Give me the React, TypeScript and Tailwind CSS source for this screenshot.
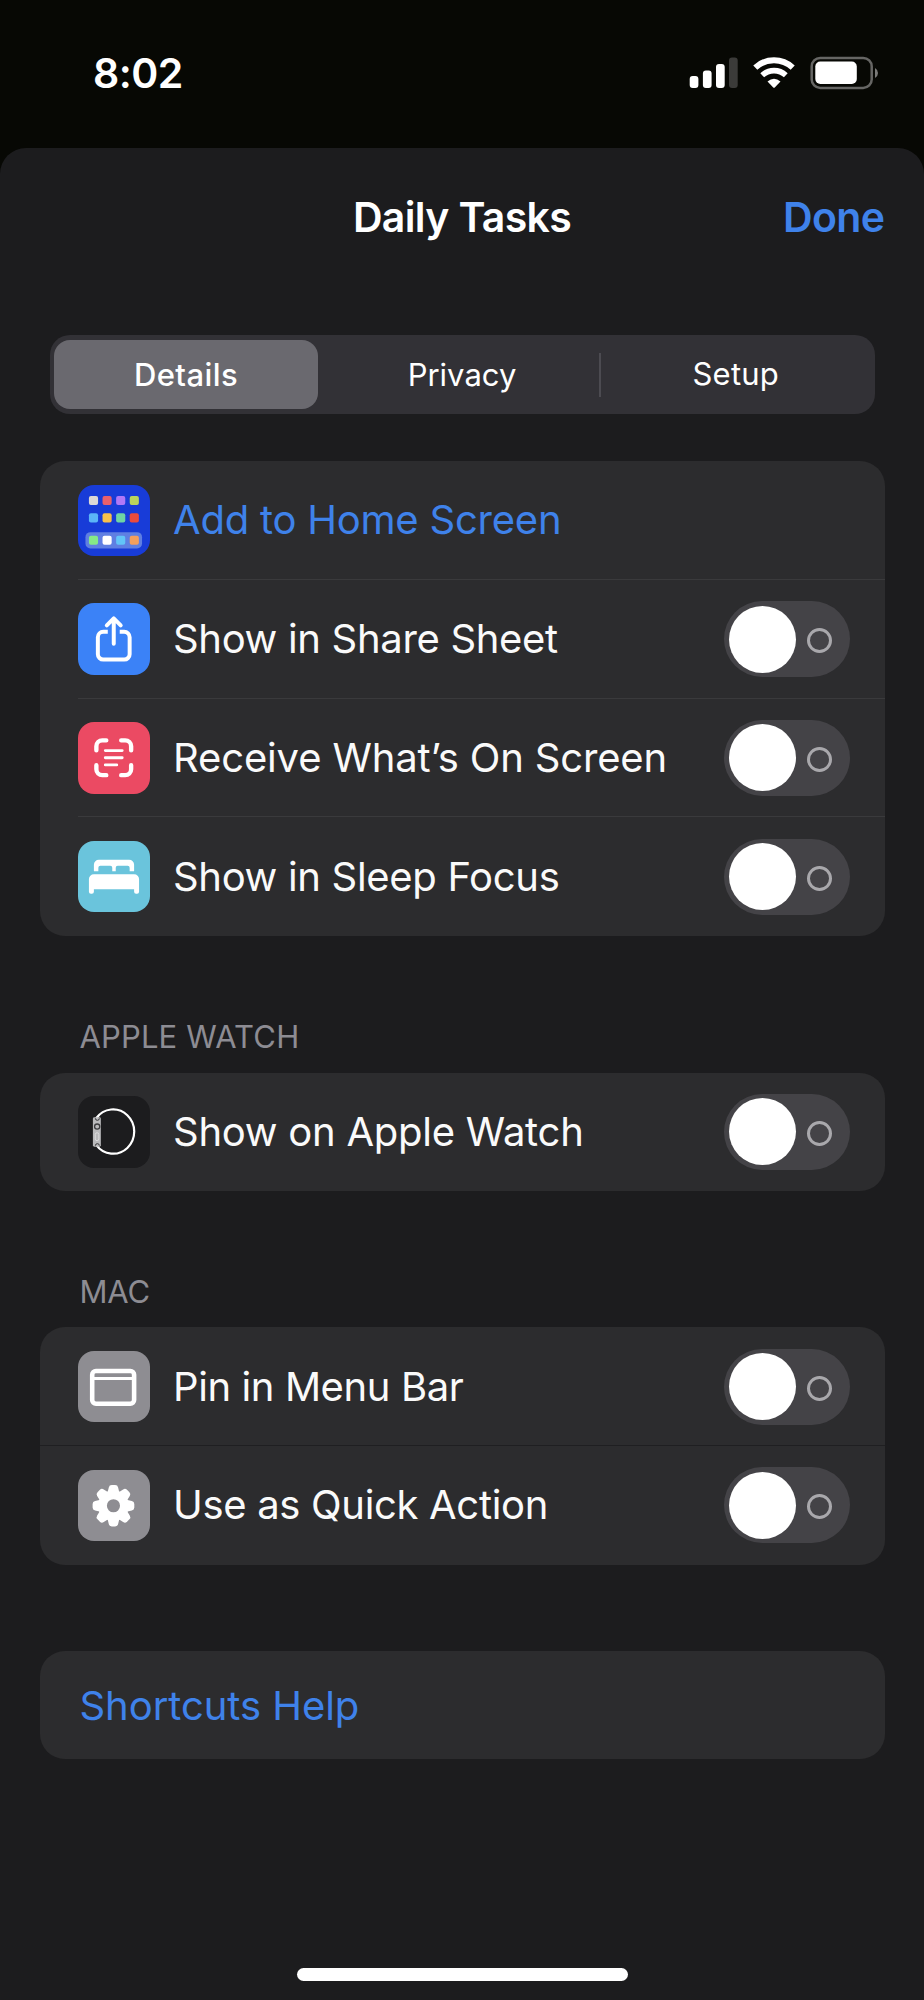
import React from 'react';

const appColors = [
  ['#dcd9d6', '#e9606c', '#b078f7', '#b9d55b'],
  ['#5bb5f8', '#f9c04a', '#6fd5a4', '#ea4b3c'],
  ['#86ea86', '#ffffff', '#62c4f8', '#f4a05c'],
];

const appRows = [11, 28.5, 51];

function HomeScreenIcon() {
  return (
    <svg viewBox="0 0 72 72" className="size-full">
      <rect x="7.5" y="47.5" width="57" height="16.5" rx="5" fill="#5f7fe2" />
      {appColors.map((row, r) =>
        row.map((color, c) => (
          <rect key={color} x={11 + c * 13.7} y={appRows[r]} width="9.2" height="9.2" rx="2" fill={color} />
        ))
      )}
    </svg>
  );
}

function ShareIcon() {
  return (
    <svg viewBox="0 0 72 72" className="size-full" fill="none" stroke="#fff" strokeWidth="4">
      <path d="M30 29h-4.5a5.5 5.5 0 0 0-5.5 5.5v17a5.5 5.5 0 0 0 5.5 5.5h21a5.5 5.5 0 0 0 5.5-5.5v-17a5.5 5.5 0 0 0-5.5-5.5H42" />
      <path d="M36 41V16.5M29 22.5l7-7 7 7" strokeLinecap="round" strokeLinejoin="round" />
    </svg>
  );
}

function ScanIcon() {
  return (
    <svg viewBox="0 0 72 72" className="size-full" fill="none" stroke="#fff" strokeLinecap="round">
      <path
        d="M18.5 28.5v-4a6 6 0 0 1 6-6h4M43.5 18.5h4a6 6 0 0 1 6 6v4M53.5 43.5v4a6 6 0 0 1-6 6h-4M28.5 53.5h-4a6 6 0 0 1-6-6v-4"
        strokeWidth="4.4"
      />
      <path d="M27.5 28.8h17M27.5 36h17M27.5 43.2h11.5" strokeWidth="2.9" />
    </svg>
  );
}

function BedIcon() {
  return (
    <svg viewBox="0 0 72 72" className="size-full" fill="#fff">
      <path d="M16 30.5V24a5 5 0 0 1 5-5h30.5a5 5 0 0 1 5 5v6.5h-4.5V27a2 2 0 0 0-2-2h-10a2 2 0 0 0-2 2v3.5h-3.5V27a2 2 0 0 0-2-2h-10a2 2 0 0 0-2 2v3.5z" />
      <path d="M11 51V38.5a5 5 0 0 1 5-5h40.5a5 5 0 0 1 5 5V51a2 2 0 0 1-2 2h-1a2 2 0 0 1-2-2v-2.5h-40.5V51a2 2 0 0 1-2 2h-1a2 2 0 0 1-2-2z" />
    </svg>
  );
}

function WatchIcon() {
  return (
    <svg viewBox="0 0 72 72" className="size-full" fill="none">
      <path d="M18.3 22.4A21.3 22.3 0 1 1 18.3 49.2" stroke="#fff" strokeWidth="2.2" />
      <rect x="15" y="21.5" width="8" height="29.5" rx="1.5" fill="#b9b9bb" />
      <path d="M17.5 22.5a2 2 0 0 0 4 0M17.5 50a2 2 0 0 1 4 0" stroke="#333335" strokeWidth="1" />
      <circle cx="19.3" cy="30.8" r="2.6" stroke="#3c3c3e" strokeWidth="1.3" />
      <rect x="17.4" y="37" width="3.6" height="8" rx="1.8" stroke="#dededf" strokeWidth="0.9" />
    </svg>
  );
}

function MenuBarIcon() {
  return (
    <svg viewBox="0 0 72 72" className="size-full" fill="none" stroke="#fff">
      <rect x="14.3" y="20.2" width="42.2" height="33" rx="3.8" strokeWidth="4.6" />
      <path d="M14.5 27.7h42" strokeWidth="3" />
    </svg>
  );
}

const teeth = [0, 45, 90, 135, 180, 225, 270, 315];

function GearIcon() {
  return (
    <svg viewBox="0 0 72 72" className="size-full" fill="#fff">
      {teeth.map((angle) => (
        <path
          key={angle}
          d="M29.7 23L31 17.5Q31.5 15 34 15h3.4Q39.9 15 40.4 17.5L41.7 23z"
          transform={`rotate(${angle} 35.7 36)`}
        />
      ))}
      <circle cx="35.7" cy="36" r="11" fill="none" stroke="#fff" strokeWidth="8.8" />
    </svg>
  );
}

function Toggle() {
  return (
    <div className="flex h-[76px] w-[126px] shrink-0 items-center justify-between rounded-full bg-[#444347] pr-[18px] pl-[5px]">
      <span className="size-[67px] rounded-full bg-white" />
      <span className="mt-[3px] size-[25px] rounded-full border-3 border-[#a9a8ac]" />
    </div>
  );
}

interface RowProps {
  icon: React.ReactNode;
  tile: string;
  label: string;
  spacing: string;
  link?: boolean;
  divider?: string;
}

function Row({ icon, tile, label, spacing, link, divider = 'border-[#3a3a3c]' }: RowProps) {
  return (
    <div className="flex h-[118.75px] pl-[38.5px]">
      <div className={`flex flex-1 items-center border-b pt-px pr-[34.5px] ${divider}`}>
        <div className={`size-[71.5px] shrink-0 overflow-hidden rounded-[16px] ${tile}`}>{icon}</div>
        <span className={`ml-[23.5px] flex-1 text-[40px] leading-none whitespace-nowrap ${spacing} ${link ? 'text-[#3f82ea]' : 'text-[#fafafa]'}`}>
          {label}
        </span>
        {!link && <Toggle />}
      </div>
    </div>
  );
}

function Card({ children }: { children: React.ReactNode }) {
  return <section className="overflow-hidden rounded-[25px] bg-[#2c2c2e]">{children}</section>;
}

function StatusBar() {
  return (
    <header className="flex h-[148px] items-start justify-between bg-[#070804] pt-[48px] pr-[46px] pl-[93px] text-white">
      <span className="text-[41px] leading-[50px] font-semibold tracking-[-0.5px]">8:02</span>
      <svg width="190" height="34" viewBox="0 0 190 34" className="mt-[8px]">
        <rect x="1.7" y="20" width="8.7" height="12" rx="3" fill="#fff" />
        <rect x="14.9" y="14.5" width="8.7" height="17.5" rx="3" fill="#fff" />
        <rect x="28" y="8" width="8.7" height="24" rx="3" fill="#fff" />
        <rect x="41" y="1.5" width="8.7" height="30.5" rx="3" fill="#3b3b39" />
        <g fill="none" stroke="#fff">
          <path d="M67.3 11.6a27.5 27.5 0 0 1 37.4 0" strokeWidth="6" />
          <path d="M74.2 19.2a17.5 17.5 0 0 1 23.6 0" strokeWidth="5.6" />
        </g>
        <path d="M79.5 25.5Q86 20 92.5 25.5L87 31.2Q86 32.2 85 31.2z" fill="#fff" />
        <rect x="123.7" y="1.9" width="60" height="30" rx="8.5" fill="none" stroke="#666664" strokeWidth="2.5" />
        <rect x="127.3" y="5.5" width="41.5" height="22.5" rx="5" fill="#fff" />
        <path d="M187 12v10q3-1.800 3-5t-3-5z" fill="#7b7b79" />
      </svg>
    </header>
  );
}

function App() {
  return (
    <div className="flex h-[2000px] w-[924px] flex-col bg-[#070804] font-['Inter','Liberation_Sans',sans-serif]">
      <StatusBar />
      <main className="flex flex-1 flex-col rounded-t-[26px] bg-[#1c1c1e] px-[39.5px]">
        <div className="grid h-[138px] grid-cols-[1fr_auto_1fr] items-center font-semibold">
          <h1 className="col-start-2 pt-px text-[41px] tracking-[-0.65px] text-white">Daily Tasks</h1>
          <button className="justify-self-end pt-[2px] text-[41px] tracking-[-0.6px] text-[#3f82ea]">Done</button>
        </div>

        <nav className="mx-[10px] mt-[49px] grid h-[79px] grid-cols-[271px_274px_1fr] items-center rounded-[20px] bg-[#323136] py-[5px] pr-[5px] pl-[4.5px] text-[31px] text-white">
          <button className="h-full w-[264px] rounded-[16px] bg-[#6a696f] pt-px font-medium tracking-[0.4px]">Details</button>
          <button className="pt-px">Privacy</button>
          <button className="flex h-[44px] items-center justify-center border-l-2 border-[#4c4b51] pl-px tracking-[0.2px]">Setup</button>
        </nav>

        <div className="mt-[47px]">
          <Card>
            <Row icon={<HomeScreenIcon />} tile="bg-[#183cd8]" label="Add to Home Screen" spacing="tracking-[-0.22px]" link />
            <Row icon={<ShareIcon />} tile="bg-[#3b82f7]" label="Show in Share Sheet" spacing="tracking-[-0.32px]" />
            <Row icon={<ScanIcon />} tile="bg-[#eb4a63]" label="Receive What’s On Screen" spacing="tracking-[-0.15px]" />
            <Row icon={<BedIcon />} tile="bg-[#6ac4dc]" label="Show in Sleep Focus" spacing="tracking-[-0.32px]" divider="border-transparent" />
          </Card>
        </div>

        <h2 className="mt-[80px] mb-[15.5px] pl-[40px] text-[31px] leading-[41px] tracking-[0.15px] text-[#8d8c93]">APPLE WATCH</h2>
        <Card>
          <Row icon={<WatchIcon />} tile="bg-[#1c1c1e]" label="Show on Apple Watch" spacing="tracking-[-0.25px]" divider="border-transparent" />
        </Card>

        <h2 className="mt-[79.5px] mb-[15.5px] pl-[40px] text-[31px] leading-[41px] tracking-[-0.2px] text-[#8d8c93]">MAC</h2>
        <Card>
          <Row icon={<MenuBarIcon />} tile="bg-[#8e8d92]" label="Pin in Menu Bar" spacing="tracking-[-0.4px]" divider="border-transparent" />
          <div className="-mt-px h-px bg-[#1f1f21]" />
          <Row icon={<GearIcon />} tile="bg-[#8e8d92]" label="Use as Quick Action" spacing="tracking-[-0.32px]" divider="border-transparent" />
        </Card>

        <div className="mt-[86.5px]">
          <Card>
            <a className="flex h-[108px] items-center pt-[2px] pl-[40px] text-[40px] tracking-[-0.05px] text-[#3f82ea]">Shortcuts Help</a>
          </Card>
        </div>

        <div className="mx-auto mt-auto mb-[19.5px] h-[12.5px] w-[331px] rounded-full bg-white" />
      </main>
    </div>
  );
}

export default App;
